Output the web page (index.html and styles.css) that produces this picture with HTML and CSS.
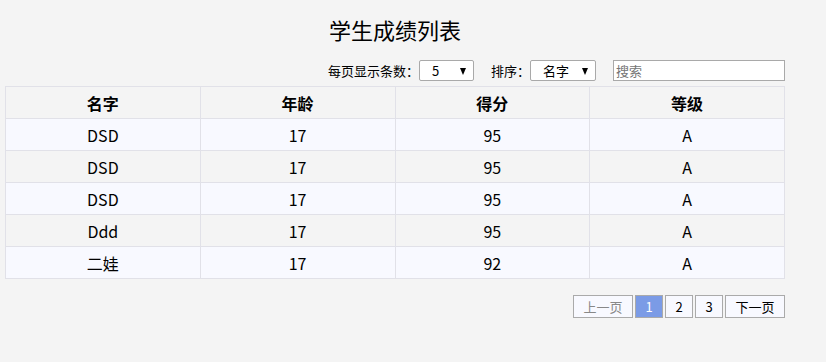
FILE: index.html
```html
<!DOCTYPE html>
<html lang="zh-CN">
<head>
    <meta charset="UTF-8">
    <meta name="viewport" content="width=device-width, initial-scale=1.0">
    <title>学生成绩列表</title>
    <link rel="stylesheet" href="styles.css">
</head>
<body>
    <div class="container">
        <h2>学生成绩列表</h2>

        <div class="toolbar">
            <label for="pageSize">每页显示条数：</label>
            <span class="select-box size-box">
                <select id="pageSize">
                    <option>5</option>
                    <option>10</option>
                </select>
            </span>
            <label for="sortBy" class="sort-label">排序：</label>
            <span class="select-box sort-box">
                <select id="sortBy">
                    <option>名字</option>
                    <option>年龄</option>
                    <option>得分</option>
                </select>
            </span>
            <input type="text" id="search" placeholder="搜索">
        </div>

        <table class="score-table">
            <thead>
                <tr><th>名字</th><th>年龄</th><th>得分</th><th>等级</th></tr>
            </thead>
            <tbody>
                <tr><td>DSD</td><td>17</td><td>95</td><td>A</td></tr>
                <tr><td>DSD</td><td>17</td><td>95</td><td>A</td></tr>
                <tr><td>DSD</td><td>17</td><td>95</td><td>A</td></tr>
                <tr><td>Ddd</td><td>17</td><td>95</td><td>A</td></tr>
                <tr><td>二娃</td><td>17</td><td>92</td><td>A</td></tr>
            </tbody>
        </table>

        <div class="pager">
            <button class="prev">上一页</button>
            <button class="active">1</button>
            <button>2</button>
            <button>3</button>
            <button class="next">下一页</button>
        </div>
    </div>
</body>
</html>
```

FILE: styles.css
```css
body {
    margin: 0;
    background-color: #f4f4f4;
    font-family: "Noto Sans CJK SC", "Noto Sans", sans-serif;
    color: #000;
}
.container {
    width: 780px;
    margin-left: 5px;
}
.container h2 {
    margin: 0;
    padding-top: 13px;
    height: 60px;
    box-sizing: border-box;
    text-align: center;
    font-size: 22px;
    font-weight: normal;
    line-height: 32px;
}
.toolbar {
    display: flex;
    justify-content: flex-end;
    align-items: center;
    height: 21px;
    font-size: 13px;
}
.sort-label {
    margin-left: 17px;
}
.select-box {
    position: relative;
    display: inline-block;
    height: 21px;
}
.select-box::after {
    content: "";
    position: absolute;
    right: 8px;
    top: 8px;
    border-left: 3.5px solid transparent;
    border-right: 3.5px solid transparent;
    border-top: 7px solid #000;
    pointer-events: none;
}
.select-box select {
    display: block;
    appearance: none;
    -webkit-appearance: none;
    height: 21px;
    box-sizing: border-box;
    border: 1px solid #a9a9a9;
    border-radius: 2px;
    background: #fff;
    font-family: inherit;
    font-size: 13px;
    padding: 0 0 0 12px;
    color: #000;
}
.size-box select {
    width: 55px;
}
.sort-box select {
    width: 66px;
}
#search {
    margin-left: 17px;
    width: 172px;
    height: 21px;
    box-sizing: border-box;
    border: 1px solid #a9a9a9;
    padding: 0 2px;
    font-family: inherit;
    font-size: 13px;
    background: #fff;
}
#search::placeholder {
    color: #757575;
}
.score-table {
    width: 780px;
    margin-top: 5px;
    border-collapse: collapse;
    table-layout: fixed;
    font-size: 16px;
}
.score-table th,
.score-table td {
    border: 1px solid #e1e1e8;
    height: 31px;
    padding: 0;
    text-align: center;
}
.score-table th {
    background-color: #f4f4f4;
    font-weight: bold;
}
.score-table tbody tr:nth-child(odd) {
    background-color: #f8f9ff;
}
.score-table tbody tr:nth-child(even) {
    background-color: #f4f4f4;
}
.pager {
    display: flex;
    justify-content: flex-end;
    gap: 2px;
    margin-top: 16px;
}
.pager button {
    height: 23px;
    min-width: 28px;
    box-sizing: border-box;
    border: 1px solid #aaa;
    background-color: #f8f9ff;
    font-family: inherit;
    font-size: 13px;
    color: #000;
    padding: 0 6px;
}
.pager .prev {
    width: 60px;
    color: #888;
}
.pager .next {
    width: 60px;
}
.pager .active {
    background-color: #7b9be6;
    color: #fff;
}
```
